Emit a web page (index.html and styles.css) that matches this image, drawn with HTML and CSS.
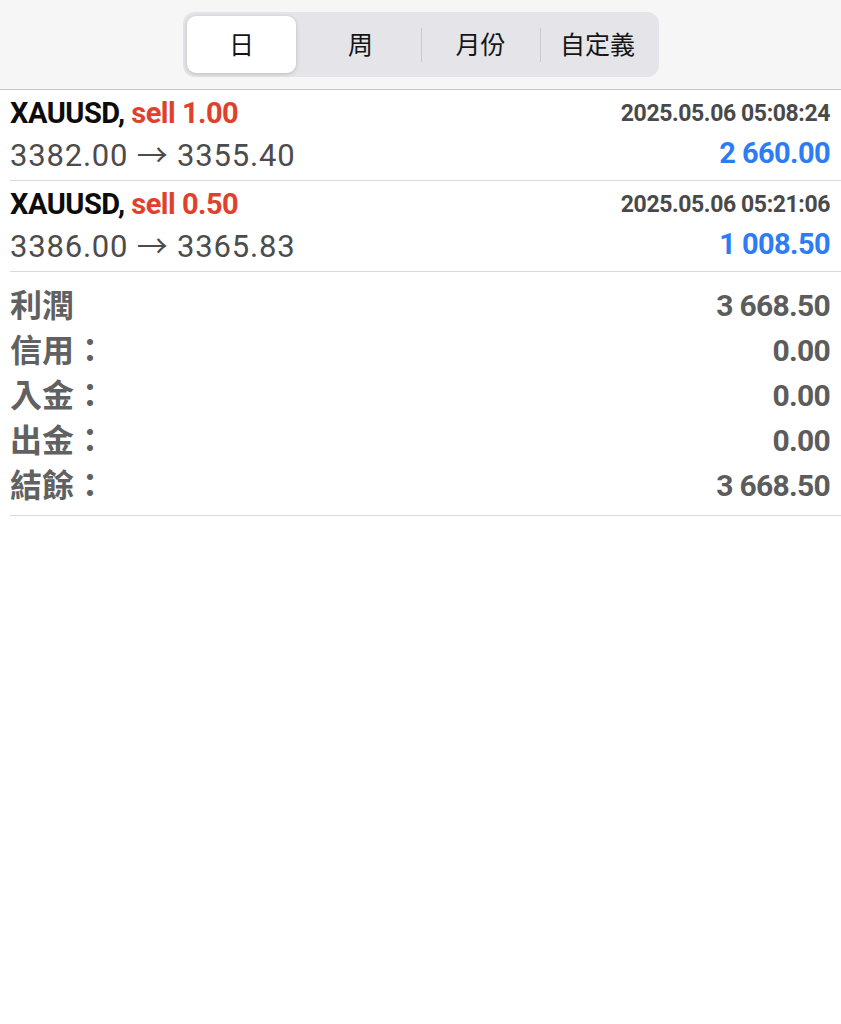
FILE: index.html
```html
<!DOCTYPE html>
<html lang="zh-Hant">
<head>
<meta charset="utf-8">
<title>報告</title>
<link rel="stylesheet" href="styles.css">
</head>
<body>
<header class="topbar">
  <div class="seg">
    <div class="seg-item active">日</div>
    <div class="seg-item">周</div>
    <div class="seg-item divided">月份</div>
    <div class="seg-item divided">自定義</div>
  </div>
</header>
<main>
  <section class="trade">
    <div class="line1">
      <span class="sym">XAUUSD, <span class="side">sell 1.00</span></span>
      <span class="time">2025.05.06 05:08:24</span>
    </div>
    <div class="line2">
      <span class="prices">3382.00 → 3355.40</span>
      <span class="profit">2 660.00</span>
    </div>
  </section>
  <section class="trade">
    <div class="line1">
      <span class="sym">XAUUSD, <span class="side">sell 0.50</span></span>
      <span class="time">2025.05.06 05:21:06</span>
    </div>
    <div class="line2">
      <span class="prices">3386.00 → 3365.83</span>
      <span class="profit">1 008.50</span>
    </div>
  </section>
  <section class="summary">
    <div class="srow"><span class="label">利潤</span><span class="val">3 668.50</span></div>
    <div class="srow"><span class="label">信用：</span><span class="val">0.00</span></div>
    <div class="srow"><span class="label">入金：</span><span class="val">0.00</span></div>
    <div class="srow"><span class="label">出金：</span><span class="val">0.00</span></div>
    <div class="srow"><span class="label">結餘：</span><span class="val">3 668.50</span></div>
  </section>
</main>
</body>
</html>
```
FILE: styles.css
```css
html, body {
  margin: 0;
  padding: 0;
  background: #ffffff;
}
body {
  font-family: Roboto, "Noto Sans CJK TC", sans-serif;
  color: #111;
}
.topbar {
  height: 89px;
  background: #f6f6f6;
  border-bottom: 1px solid #c4c4c4;
  display: flex;
  justify-content: center;
  align-items: center;
  padding-left: 1px;
}
.seg {
  width: 468px;
  height: 57px;
  padding: 4px;
  background: #e4e4e9;
  border-radius: 12px;
  display: grid;
  grid-template-columns: 113px 121px 119px 115px;
}
.seg-item {
  position: relative;
  display: flex;
  justify-content: center;
  align-items: center;
  padding-bottom: 3px;
  font-family: "Noto Sans CJK TC", sans-serif;
  font-size: 25px;
  color: #151515;
}
.seg-item.active {
  background: #ffffff;
  border-radius: 9px;
  margin-right: 4px;
  box-shadow: 0 1px 4px rgba(0,0,0,0.18);
}
.seg-item.divided::before {
  content: "";
  position: absolute;
  left: 0;
  top: 12px;
  bottom: 11px;
  width: 1px;
  background: #c9c9ce;
}
.trade {
  margin-left: 10px;
  padding: 4px 11px 4px 0;
  border-bottom: 1px solid #d9d9d9;
}
.line1, .line2, .srow {
  display: flex;
  justify-content: space-between;
  align-items: center;
}
.line1 { height: 38px; }
.line2 { height: 44px; padding-bottom: 3px; box-sizing: border-box; }
.sym {
  font-weight: 700;
  font-size: 29px;
  letter-spacing: -0.5px;
  color: #0c0c0c;
}
.side { color: #e0402c; }
.time {
  font-weight: 700;
  font-size: 23px;
  letter-spacing: -0.4px;
  color: #494949;
}
.prices {
  font-size: 31px;
  letter-spacing: 0.8px;
  color: #4c4c4c;
}
.profit {
  font-weight: 700;
  font-size: 29px;
  letter-spacing: -0.6px;
  color: #2d7cf4;
}
.summary {
  margin-left: 10px;
  padding: 11px 11px 7px 0;
  border-bottom: 1px solid #d9d9d9;
}
.srow { height: 45px; }
.label {
  font-family: "Noto Sans CJK TC", sans-serif;
  font-weight: 700;
  font-size: 32px;
  padding-bottom: 5px;
  color: #616161;
}
.val {
  font-weight: 700;
  font-size: 30px;
  letter-spacing: -0.7px;
  color: #5c5c5c;
}
```
